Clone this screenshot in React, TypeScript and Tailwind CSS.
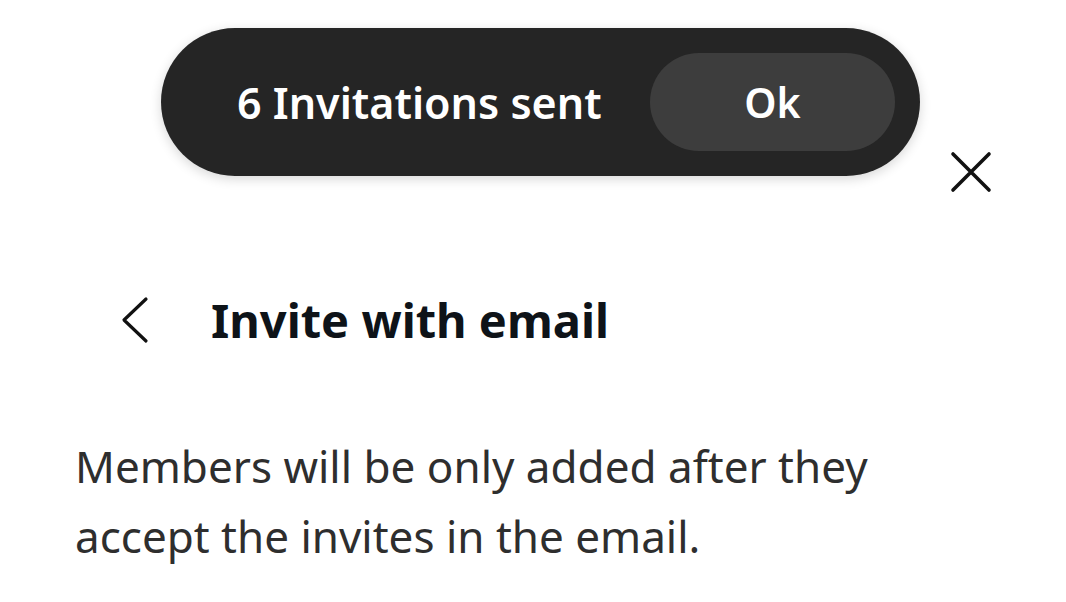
const font = { fontFamily: '"Noto Sans", "Open Sans", sans-serif' };

function CloseIcon() {
  return (
    <svg width="42" height="42" viewBox="0 0 42 42" fill="none" stroke="#111" strokeWidth="3.6" strokeLinecap="round">
      <path d="M3 3 39 39M39 3 3 39" />
    </svg>
  );
}

function BackIcon() {
  return (
    <svg width="30" height="48" viewBox="0 0 30 48" fill="none" stroke="#111" strokeWidth="3.2" strokeLinecap="round" strokeLinejoin="round">
      <path d="M26 3 4 24l22 21" />
    </svg>
  );
}

function Toast() {
  return (
    <div className="absolute left-[161px] top-[28px] flex h-[148px] w-[759px] items-center justify-between rounded-full bg-[#252525] pl-[76px] pr-[25px] shadow-[0_3px_12px_rgba(0,0,0,0.16)]">
      <span className="text-[43px] font-semibold leading-none text-white">6 Invitations sent</span>
      <button className="flex h-[98px] w-[245px] items-center justify-center rounded-full bg-[#3d3d3d] text-[41px] font-semibold leading-none text-white">
        Ok
      </button>
    </div>
  );
}

export default function App() {
  return (
    <div className="relative h-[602px] w-[1066px] overflow-hidden bg-white text-[#1a1a1a]" style={font}>
      <div className="flex flex-col pt-[151px]">
        <div className="flex justify-end pr-[74px]">
          <CloseIcon />
        </div>
        <div className="mt-[103px] flex h-[48px] items-center gap-[61px] pl-[120px]">
          <BackIcon />
          <h1 className="text-[47px] font-bold leading-[48px] text-[#0e1318]">Invite with email</h1>
        </div>
        <p className="mt-[87px] w-[960px] pl-[75px] text-[44px] leading-[70px] text-[#2e2e2e]">
          Members will be only added after they accept the invites in the email.
        </p>
      </div>
      <Toast />
    </div>
  );
}
